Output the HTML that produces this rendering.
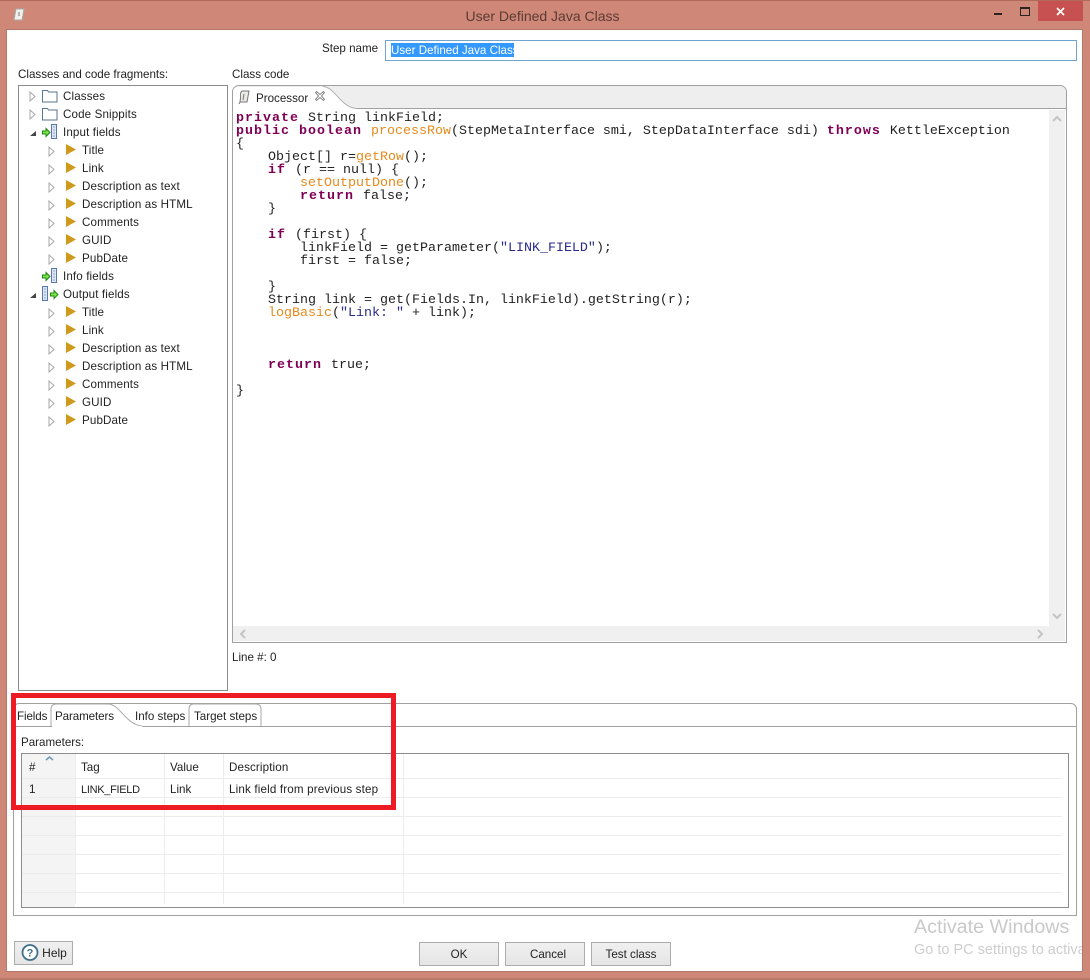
<!DOCTYPE html>
<html><head><meta charset="utf-8">
<style>
html,body{margin:0;padding:0;width:1090px;height:980px;overflow:hidden;background:#cf8878}
body{position:relative;font:11.6px/18px "Liberation Sans",sans-serif;color:#222}
.a{position:absolute}
.t{position:absolute;white-space:nowrap}
.s{letter-spacing:.13px}
pre{position:absolute;margin:0;left:236px;top:112px;font:13.33px/13px "Liberation Mono",monospace;color:#222}
pre b{font-weight:bold;color:#7f0055;letter-spacing:1px}
pre i{font-style:normal;color:#e68a1c}
pre u{text-decoration:none;color:#2a2a8c}
.btn{position:absolute;box-sizing:border-box;border:1px solid #acacac;background:linear-gradient(#f0f0f0,#e5e5e5);text-align:center;height:24px;line-height:23px;color:#222}
.hl{position:absolute;height:1px;background:#ececec}
.vl{position:absolute;width:1px;background:#ececec}
</style></head><body>
<div class="a" style="left:0;top:0;width:1090px;height:1px;background:#b06a5c"></div>
<div class="a" style="left:0;top:978px;width:1090px;height:2px;background:#b9796b"></div>
<div class="a" style="left:7px;top:30px;width:1075px;height:941px;background:#fff;outline:1px solid #b3786c"></div>

<!-- title bar -->
<svg class="a" style="left:12px;top:7px" width="14" height="16" viewBox="0 0 14 16"><path d="M4 2h8l-2 11H2z" fill="#f1f1ee" stroke="#a9a9a5"/><path d="M7 5v4" stroke="#777"/></svg>
<div class="t" style="left:0;width:1085px;text-align:center;top:7px;font-size:14px;line-height:18px;color:#5b3a33">User Defined Java Class</div>
<div class="a" style="left:994px;top:13px;width:8px;height:2px;background:#2b2320"></div>
<div class="a" style="left:1020px;top:7px;width:8px;height:6px;border:1px solid #2b2320;border-top-width:2px"></div>
<div class="a" style="left:1038px;top:1px;width:45px;height:20px;background:#c75050"></div>
<svg class="a" style="left:1056px;top:7px" width="10" height="9"><path d="M1 1l7 7M8 1l-7 7" stroke="#fff" stroke-width="1.700"/></svg>

<!-- step name -->
<div class="t" style="left:322px;top:40px">Step name</div>
<div class="a" style="left:385px;top:40px;width:690px;height:19px;border:1px solid #6fa5cf;background:#fff"></div>
<div class="t" style="left:391px;top:43px;height:14px;line-height:15px;background:#3399ff;color:#fff;width:123px">User Defined Java Class</div>

<div class="t" style="left:18px;top:66px">Classes and code fragments:</div>
<div class="t" style="left:232px;top:66px">Class code</div>

<!-- tree -->
<div class="a" style="left:18px;top:85px;width:208px;height:604px;border:1px solid #8a8a8a;background:#fff"></div>
<svg class="a" style="left:18px;top:85px" width="60" height="345" viewBox="0 0 60 345">
<defs>
<path id="o" d="M0 0l5 4.500l-5 4.500z" fill="#fff" stroke="#a8a8a8"/>
<path id="y" d="M0 0l10 5.500l-10 5.500z" fill="#cf9a1c"/>
<g id="fd"><path d="M.5 1.500h5l1 1.500h8.500v10h-14.500z" fill="#fff" stroke="#5a7690"/></g>
<g id="ga"><path d="M0 2.500h3.500v-2.500l4 4l-4 4v-2.500h-3.500z" transform="translate(.5 .5)" fill="#7fe04c" stroke="#1d8a12"/></g>
<g id="cl"><rect x=".5" y=".5" width="5" height="14" fill="#dbe6f4" stroke="#5878ae"/><path d="M2 3h2M2 6h2M2 9h2M2 12h2" stroke="#8fa5c6"/></g>
</defs>
<use href="#o" x="12" y="7"/><use href="#fd" x="24" y="4"/>
<use href="#o" x="12" y="25"/><use href="#fd" x="24" y="22"/>
<path d="M12 51l6-5v5z" fill="#444"/><use href="#ga" x="24" y="43"/><use href="#cl" x="33" y="39"/>
<use href="#o" x="31" y="62"/><use href="#y" x="48" y="59"/>
<use href="#o" x="31" y="80"/><use href="#y" x="48" y="77"/>
<use href="#o" x="31" y="98"/><use href="#y" x="48" y="95"/>
<use href="#o" x="31" y="116"/><use href="#y" x="48" y="113"/>
<use href="#o" x="31" y="134"/><use href="#y" x="48" y="131"/>
<use href="#o" x="31" y="152"/><use href="#y" x="48" y="149"/>
<use href="#o" x="31" y="170"/><use href="#y" x="48" y="167"/>
<use href="#ga" x="24" y="187"/><use href="#cl" x="33" y="183"/>
<path d="M12 213l6-5v5z" fill="#444"/><use href="#cl" x="24" y="201"/><use href="#ga" x="32" y="205"/>
<use href="#o" x="31" y="224"/><use href="#y" x="48" y="221"/>
<use href="#o" x="31" y="242"/><use href="#y" x="48" y="239"/>
<use href="#o" x="31" y="260"/><use href="#y" x="48" y="257"/>
<use href="#o" x="31" y="278"/><use href="#y" x="48" y="275"/>
<use href="#o" x="31" y="296"/><use href="#y" x="48" y="293"/>
<use href="#o" x="31" y="314"/><use href="#y" x="48" y="311"/>
<use href="#o" x="31" y="332"/><use href="#y" x="48" y="329"/>
</svg>
<div class="t s" style="left:63px;top:88px">Classes</div>
<div class="t s" style="left:63px;top:106px">Code Snippits</div>
<div class="t s" style="left:63px;top:124px">Input fields</div>
<div class="t s" style="left:82px;top:142px">Title</div>
<div class="t s" style="left:82px;top:160px">Link</div>
<div class="t s" style="left:82px;top:178px">Description as text</div>
<div class="t s" style="left:82px;top:196px">Description as HTML</div>
<div class="t s" style="left:82px;top:214px">Comments</div>
<div class="t s" style="left:82px;top:232px">GUID</div>
<div class="t s" style="left:82px;top:250px">PubDate</div>
<div class="t s" style="left:63px;top:268px">Info fields</div>
<div class="t s" style="left:63px;top:286px">Output fields</div>
<div class="t s" style="left:82px;top:304px">Title</div>
<div class="t s" style="left:82px;top:322px">Link</div>
<div class="t s" style="left:82px;top:340px">Description as text</div>
<div class="t s" style="left:82px;top:358px">Description as HTML</div>
<div class="t s" style="left:82px;top:376px">Comments</div>
<div class="t s" style="left:82px;top:394px">GUID</div>
<div class="t s" style="left:82px;top:412px">PubDate</div>

<!-- code panel -->
<div class="a" style="left:232px;top:85px;width:833px;height:556px;border:1px solid #a0a0a0;border-radius:7px 7px 0 0;background:#fff"></div>
<div class="a" style="left:233px;top:86px;width:833px;height:22px;background:#eeeeee;border-bottom:1px solid #a0a0a0;border-radius:6px 6px 0 0"></div>
<svg class="a" style="left:233px;top:86px" width="130" height="24"><path d="M0 23V6Q0 1 6 1H90C102 1 108 22 124 22.500V24H0z" fill="#fff"/><path d="M90 .5C102 1 108 22 124 22.500" fill="none" stroke="#b0b0b0"/></svg>
<svg class="a" style="left:237px;top:90px" width="14" height="15" viewBox="0 0 14 15"><path d="M5 1h7l-2 11H3L2 14M5 1Q3 2 3.500 8L3 12" fill="#eceae4" stroke="#777"/><path d="M7 4l-1 6" stroke="#777"/></svg>
<div class="t" style="left:256px;top:90px">Processor</div>
<svg class="a" style="left:315px;top:91px" width="11" height="11"><path d="M1.500 .5l3.500 3l3.500-3l1 1l-3 3.500l3 3.500l-1 1l-3.500-3l-3.500 3l-1-1l3-3.500l-3-3.500z" fill="#fff" stroke="#8a8a8a"/></svg>
<pre><b>private </b>String linkField;
<b>public boolean </b><i>processRow</i>(StepMetaInterface smi, StepDataInterface sdi) <b>throws </b>KettleException
{
    Object[] r=<i>getRow</i>();
    <b>if </b>(r == null) {
        <i>setOutputDone</i>();
        <b>return </b>false;
    }

    <b>if </b>(first) {
        linkField = getParameter(<u>"LINK_FIELD"</u>);
        first = false;

    }
    String link = get(Fields.In, linkField).getString(r);
    <i>logBasic</i>(<u>"Link: "</u> + link);



    <b>return </b>true;

}</pre>
<div class="a" style="left:1049px;top:110px;width:16px;height:516px;background:#f0f0f0"></div>
<div class="a" style="left:233px;top:626px;width:832px;height:15px;background:#f0f0f0"></div>
<svg class="a" style="left:1051px;top:114px" width="12" height="10"><path d="M2 7l4-4l4 4" fill="none" stroke="#c4c4c4" stroke-width="2"/></svg>
<svg class="a" style="left:1051px;top:612px" width="12" height="10"><path d="M2 2l4 4l4-4" fill="none" stroke="#c4c4c4" stroke-width="2"/></svg>
<svg class="a" style="left:238px;top:628px" width="10" height="12"><path d="M7 2l-4 4l4 4" fill="none" stroke="#c4c4c4" stroke-width="2"/></svg>
<svg class="a" style="left:1035px;top:628px" width="10" height="12"><path d="M3 2l4 4l-4 4" fill="none" stroke="#c4c4c4" stroke-width="2"/></svg>
<div class="t" style="left:232px;top:649px">Line #: 0</div>

<!-- lower tabs -->
<div class="a" style="left:13px;top:703px;width:1062px;height:211px;border:1px solid #a0a0a0;border-radius:6px 6px 0 0;background:#fff"></div>
<div class="a" style="left:14px;top:704px;width:1062px;height:22px;border-bottom:1px solid #a0a0a0"></div>
<svg class="a" style="left:14px;top:703px" width="260" height="25"><path d="M37 23V6Q37 1 43 1H94C106 1 112 22 128 23" fill="#fff" stroke="#a8a8a8"/><path d="M38 23h90v2h-90z" fill="#fff"/><path d="M175 23V6Q175 1 180 1H241Q247 1 247 6V23" fill="none" stroke="#a8a8a8"/></svg>
<div class="t" style="left:17px;top:708px;letter-spacing:-.1px">Fields</div>
<div class="t" style="left:55px;top:708px;letter-spacing:-.1px">Parameters</div>
<div class="t" style="left:135px;top:708px">Info steps</div>
<div class="t" style="left:194px;top:708px">Target steps</div>
<div class="t" style="left:21px;top:734px">Parameters:</div>

<!-- table -->
<div class="a" style="left:21px;top:753px;width:1046px;height:153px;border:1px solid #8c8c8c;background:#fff"></div>
<div class="a" style="left:22px;top:754px;width:53px;height:153px;background:#f4f4f4"></div>
<div class="hl" style="left:22px;top:778px;width:1040px"></div>
<div class="hl" style="left:22px;top:797px;width:1040px"></div>
<div class="hl" style="left:22px;top:816px;width:1040px"></div>
<div class="hl" style="left:22px;top:835px;width:1040px"></div>
<div class="hl" style="left:22px;top:854px;width:1040px"></div>
<div class="hl" style="left:22px;top:873px;width:1040px"></div>
<div class="hl" style="left:22px;top:892px;width:1040px"></div>
<div class="vl" style="left:75px;top:754px;height:150px"></div>
<div class="vl" style="left:164px;top:754px;height:150px"></div>
<div class="vl" style="left:223px;top:754px;height:150px"></div>
<div class="vl" style="left:403px;top:754px;height:150px"></div>
<svg class="a" style="left:45px;top:756px" width="9" height="5"><path d="M1 4l3.500-3l3.500 3" fill="none" stroke="#6c9ab8" stroke-width="1.500"/></svg>
<div class="t" style="left:29px;top:759px">#</div>
<div class="t" style="left:81px;top:759px">Tag</div>
<div class="t" style="left:170px;top:759px">Value</div>
<div class="t s" style="left:229px;top:759px">Description</div>
<div class="t" style="left:29px;top:781px">1</div>
<div class="t" style="left:81px;top:781px;font-size:11px;letter-spacing:-.3px">LINK_FIELD</div>
<div class="t" style="left:170px;top:781px">Link</div>
<div class="t" style="left:229px;top:781px;letter-spacing:.17px">Link field from previous step</div>

<!-- red annotation -->
<div class="a" style="left:11px;top:693px;width:375px;height:107px;border:5px solid #ed1c24"></div>

<!-- buttons -->
<div class="btn" style="left:14px;top:941px;width:59px;padding-left:22px;font-size:12px">Help</div>
<svg class="a" style="left:21px;top:943px" width="18" height="19" viewBox="0 0 18 19"><circle cx="9" cy="9.500" r="7.500" fill="#fff" stroke="#3f6f8c" stroke-width="1.800"/><text x="9" y="13.500" text-anchor="middle" font-family="Liberation Sans" font-size="11" font-weight="bold" fill="#3f6f8c">?</text></svg>
<div class="btn" style="left:419px;top:942px;width:80px">OK</div>
<div class="btn" style="left:505px;top:942px;width:80px;padding-left:6px">Cancel</div>
<div class="btn" style="left:591px;top:942px;width:80px">Test class</div>

<div class="t" style="left:914px;top:916px;font-size:19.700px;line-height:22px;color:#c9c9c9">Activate Windows</div>
<div class="t" style="left:914px;top:941px;font-size:14.500px;line-height:18px;color:#cdcdcd;width:168px;overflow:hidden">Go to PC settings to activate</div>
</body></html>
